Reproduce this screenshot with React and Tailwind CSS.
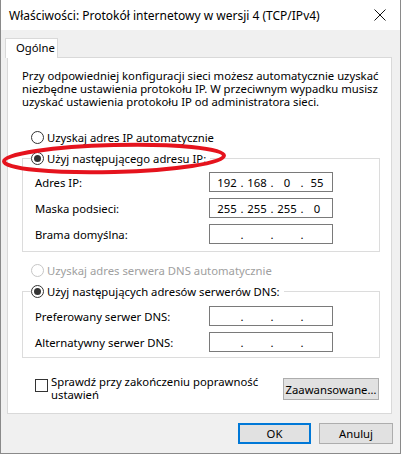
import React from "react";

function Radio({ checked, disabled }) {
    return (
        <span
            className={
                "w-[13px] h-[13px] rounded-full border bg-white flex items-center justify-center shrink-0 " +
                (disabled ? "border-[#c6c6c6]" : "border-[#333333]")
            }
        >
            {checked && <span className="w-[7px] h-[7px] rounded-full bg-[#333333]" />}
        </span>
    );
}

function IpBox({ parts }) {
    return (
        <div className="w-[124px] h-[20px] border border-[#7a7a7a] bg-white flex items-center pl-[4px] text-black">
            {parts.map((p, i) => (
                <React.Fragment key={i}>
                    <span className="w-[26px] text-center">{p}</span>
                    {i < 3 && <span className="w-[4px] text-center">.</span>}
                </React.Fragment>
            ))}
        </div>
    );
}

function FieldRow({ label, parts }) {
    return (
        <div className="flex items-center h-[20px]">
            <span className="w-[186px] pl-[12px]">{label}</span>
            <IpBox parts={parts} />
        </div>
    );
}

export default function App() {
    const empty = ["", "", "", ""];
    return (
        <div className="relative w-[401px] h-[454px] bg-[#f0f0f0] border-x border-b border-[#8a8a8a] font-['Noto_Sans',sans-serif] text-[11.3px] leading-[15px] text-black overflow-hidden whitespace-nowrap">
            {/* title bar */}
            <div className="h-[30px] bg-white flex items-center justify-between pl-[8px] pr-[14px] text-[12px]">
                <span>Właściwości: Protokół internetowy w wersji 4 (TCP/IPv4)</span>
                <svg width="12" height="12" viewBox="0 0 12 12">
                    <path d="M0.5 0.5 L11.5 11.5 M11.5 0.5 L0.5 11.5" stroke="#111" strokeWidth="1" />
                </svg>
            </div>

            {/* tab */}
            <div className="mt-[8px] ml-[4px] w-[53px] h-[20px] bg-white border-x border-t border-[#d9d9d9] pl-[10px] pt-[1px] relative z-10">
                Ogólne
            </div>

            {/* panel */}
            <div className="ml-[6px] -mt-px w-[385px] h-[357px] bg-white border border-[#d9d9d9]">
                <p className="mt-[11px] ml-[14px] leading-[13px]">
                    Przy odpowiedniej konfiguracji sieci możesz automatycznie uzyskać
                    <br />
                    niezbędne ustawienia protokołu IP. W przeciwnym wypadku musisz
                    <br />
                    uzyskać ustawienia protokołu IP od administratora sieci.
                </p>

                <div className="mt-[22px] ml-[23px] flex items-center gap-[3px] h-[15px]">
                    <Radio />
                    <span>Uzyskaj adres IP automatycznie</span>
                </div>

                <fieldset className="mt-[6px] ml-[14px] w-[358px] border border-[#dcdcdc] pb-[7px]">
                    <legend className="ml-[8px] pr-[4px] flex items-center gap-[3px] h-[15px]">
                        <Radio checked />
                        <span>Użyj następującego adresu IP:</span>
                    </legend>
                    <div className="mt-[6px] flex flex-col gap-[6px]">
                        <FieldRow label="Adres IP:" parts={["192", "168", "0", "55"]} />
                        <FieldRow label="Maska podsieci:" parts={["255", "255", "255", "0"]} />
                        <FieldRow label="Brama domyślna:" parts={empty} />
                    </div>
                </fieldset>

                <div className="mt-[11px] ml-[23px] flex items-center gap-[3px] h-[15px] text-[#a0a0a0]">
                    <Radio disabled />
                    <span>Uzyskaj adres serwera DNS automatycznie</span>
                </div>

                <fieldset className="mt-[6px] ml-[14px] w-[358px] border border-[#dcdcdc] pb-[5px]">
                    <legend className="ml-[8px] pr-[4px] flex items-center gap-[3px] h-[15px]">
                        <Radio checked />
                        <span>Użyj następujących adresów serwerów DNS:</span>
                    </legend>
                    <div className="mt-[7px] flex flex-col gap-[6px]">
                        <FieldRow label="Preferowany serwer DNS:" parts={empty} />
                        <FieldRow label="Alternatywny serwer DNS:" parts={empty} />
                    </div>
                </fieldset>

                <div className="mt-[20px] ml-[27px] mr-[12px] flex items-start justify-between">
                    <div className="flex items-start gap-[3px]">
                        <span className="mt-[1px] w-[13px] h-[13px] border border-[#333333] bg-white" />
                        <span className="-mt-[3px] leading-[13px]">
                            Sprawdź przy zakończeniu poprawność
                            <br />
                            ustawień
                        </span>
                    </div>
                    <button className="w-[96px] h-[22px] bg-[#e1e1e1] border border-[#adadad]">
                        Zaawansowane…
                    </button>
                </div>
            </div>

            {/* dialog buttons */}
            <div className="mt-[9px] mr-[7px] flex justify-end gap-[8px]">
                <button className="w-[73px] h-[21px] bg-[#e1e1e1] border-2 border-[#0078d7]">OK</button>
                <button className="w-[74px] h-[21px] bg-[#e1e1e1] border border-[#adadad]">Anuluj</button>
            </div>

            {/* red annotation */}
            <svg className="absolute left-0 top-[138px]" width="232" height="40" viewBox="0 0 232 40">
                <ellipse
                    cx="113"
                    cy="20.5"
                    rx="110"
                    ry="13.5"
                    transform="rotate(-1.5 113 20.5)"
                    fill="none"
                    stroke="#e5131d"
                    strokeWidth="4"
                />
            </svg>
        </div>
    );
}
